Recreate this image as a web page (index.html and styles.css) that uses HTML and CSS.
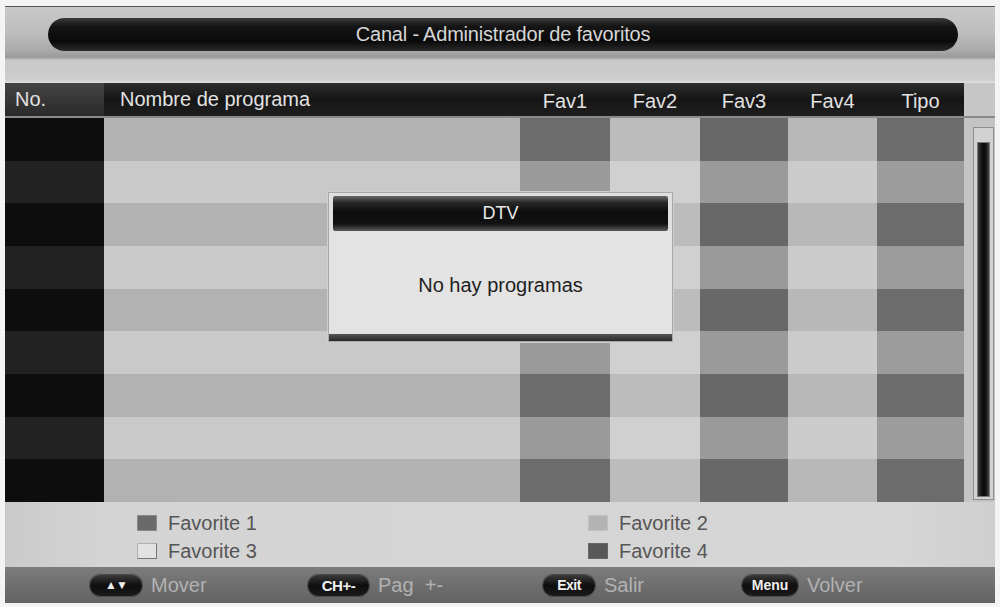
FILE: index.html
```html
<!DOCTYPE html>
<html>
<head>
<meta charset="utf-8">
<link rel="stylesheet" href="styles.css">
</head>
<body>
<div class="screen">
  <div class="top">
    <div class="title-pill">Canal - Administrador de favoritos</div>
    <div class="top-band"></div>
  </div>
  <div class="header">
    <div class="h-no">No.</div>
    <div class="h-name">Nombre de programa</div>
    <div class="h-col">Fav1</div>
    <div class="h-col">Fav2</div>
    <div class="h-col">Fav3</div>
    <div class="h-col">Fav4</div>
    <div class="h-col">Tipo</div>
    <div class="h-end"></div>
  </div>
  <div class="table">
    <div class="rows">
      <div class="row a"><div></div><div></div><div></div><div></div><div></div><div></div><div></div></div>
      <div class="row b"><div></div><div></div><div></div><div></div><div></div><div></div><div></div></div>
      <div class="row a"><div></div><div></div><div></div><div></div><div></div><div></div><div></div></div>
      <div class="row b"><div></div><div></div><div></div><div></div><div></div><div></div><div></div></div>
      <div class="row a"><div></div><div></div><div></div><div></div><div></div><div></div><div></div></div>
      <div class="row b"><div></div><div></div><div></div><div></div><div></div><div></div><div></div></div>
      <div class="row a"><div></div><div></div><div></div><div></div><div></div><div></div><div></div></div>
      <div class="row b"><div></div><div></div><div></div><div></div><div></div><div></div><div></div></div>
      <div class="row a"><div></div><div></div><div></div><div></div><div></div><div></div><div></div></div>
    </div>
    <div class="scroll">
      <div class="scroll-frame"><div class="scroll-track"></div></div>
    </div>
  </div>
  <div class="legend">
    <div class="leg"><span class="sw sw1"></span>Favorite 1</div>
    <div class="leg"><span class="sw sw2"></span>Favorite 2</div>
    <div class="leg"><span class="sw sw3"></span>Favorite 3</div>
    <div class="leg"><span class="sw sw4"></span>Favorite 4</div>
  </div>
  <div class="footer">
    <div class="fitem"><span class="key key-arrows">▲▼</span>Mover</div>
    <div class="fitem"><span class="key key-ch">CH+-</span>Pag&nbsp; +-</div>
    <div class="fitem"><span class="key key-exit">Exit</span>Salir</div>
    <div class="fitem"><span class="key key-menu">Menu</span>Volver</div>
  </div>

  <div class="dialog">
    <div class="dlg-title">DTV</div>
    <div class="dlg-body">No hay programas</div>
    <div class="dlg-bottom"></div>
  </div>
</div>
</body>
</html>
```
FILE: styles.css
```css
html, body {
  margin: 0;
  padding: 0;
  background: #f4f4f4;
}
body {
  font-family: "Liberation Sans", Arial, sans-serif;
}
.screen {
  position: relative;
  width: 990px;
  height: 597px;
  margin: 6px 0 0 5px;
  background: #c6c6c6;
  display: flex;
  flex-direction: column;
  overflow: hidden;
  border-top: 1px solid #555;
  box-sizing: border-box;
}

/* top title area */
.top {
  height: 76px;
  display: flex;
  flex-direction: column;
  background: linear-gradient(#c9c9c9 0%, #bdbdbd 35%, #a9a9a9 58%, #9a9a9a 66%, #c8c8c8 70%, #cdcdcd 95%, #e0e0e0 100%);
}
.title-pill {
  margin: 11px 37px 0 43px;
  height: 33px;
  border-radius: 17px;
  background: linear-gradient(#3a3a3a 0%, #151515 25%, #0a0a0a 70%, #2a2a2a 100%);
  color: #d6d6d6;
  font-size: 20px;
  line-height: 33px;
  text-align: center;
  letter-spacing: -0.2px;
}
.top-band {
  flex: 1;
}

/* header */
.header {
  height: 33px;
  display: grid;
  grid-template-columns: 99px 416px 90px 90px 88px 89px 87px 31px;
  align-items: center;
  background: linear-gradient(#2e2e2e, #151515 50%, #1f1f1f);
  border-bottom: 2px solid #8a8a8a;
  color: #e2e2e2;
  font-size: 20px;
}
.h-no {
  height: 100%;
  line-height: 33px;
  padding-left: 10px;
  background: linear-gradient(#444, #2a2a2a);
}
.h-name {
  padding-left: 16px;
}
.h-col {
  text-align: center;
  padding-top: 4px;
}
.h-end {
  height: 100%;
  background: #c6c6c6;
}

/* table */
.table {
  height: 384px;
  display: flex;
}
.rows {
  width: 959px;
  display: flex;
  flex-direction: column;
}
.row {
  flex: 1;
  display: grid;
  grid-template-columns: 99px 416px 90px 90px 88px 89px 87px;
}
.row.a > div:nth-child(1) { background: #0d0d0d; }
.row.a > div:nth-child(2) { background: #b2b2b2; }
.row.a > div:nth-child(3) { background: #6c6c6c; }
.row.a > div:nth-child(4) { background: #bcbcbc; }
.row.a > div:nth-child(5) { background: #686868; }
.row.a > div:nth-child(6) { background: #b8b8b8; }
.row.a > div:nth-child(7) { background: #6c6c6c; }
.row.b > div:nth-child(1) { background: #222222; }
.row.b > div:nth-child(2) { background: #c9c9c9; }
.row.b > div:nth-child(3) { background: #9a9a9a; }
.row.b > div:nth-child(4) { background: #d0d0d0; }
.row.b > div:nth-child(5) { background: #9a9a9a; }
.row.b > div:nth-child(6) { background: #cbcbcb; }
.row.b > div:nth-child(7) { background: #9c9c9c; }

.scroll {
  flex: 1;
  background: #c4c4c4;
  padding: 9px 1px 2px 9px;
}
.scroll-frame {
  height: 100%;
  box-sizing: border-box;
  border: 1px solid #8e8e8e;
  background: #d2d2d2;
  padding: 14px 3px 2px 3px;
}
.scroll-track {
  height: 100%;
  box-sizing: border-box;
  border: 1px solid #777;
  background: linear-gradient(90deg, #3a3a3a, #0c0c0c 40%, #111 70%, #444);
}

/* legend */
.legend {
  height: 65px;
  box-sizing: border-box;
  padding: 7px 0 0 132px;
  display: grid;
  grid-template-columns: 451px auto;
  grid-auto-rows: 28px;
  background: linear-gradient(90deg, #cacaca, #d4d4d4 10%, #d6d6d6 90%, #cfcfcf);
  color: #555;
  font-size: 20px;
}
.leg {
  display: flex;
  align-items: center;
}
.sw {
  width: 20px;
  height: 16px;
  margin-right: 11px;
  box-sizing: border-box;
}
.sw1 { background: #6a6a6a; border: 1px solid #888; }
.sw2 { background: #b3b3b3; border: 1px solid #c0c0c0; }
.sw3 { background: #e2e2e2; border: 1px solid #b0b0b0; border-right-color: #777; border-bottom-color: #777; }
.sw4 { background: #585858; border: 1px solid #666; }

/* footer */
.footer {
  flex: 1;
  display: grid;
  grid-template-columns: 218px 235px 199px auto;
  align-items: center;
  padding-left: 85px;
  background: linear-gradient(#7c7c7c, #6c6c6c 60%, #636363);
  color: #b2b2b2;
  font-size: 20px;
}
.fitem {
  display: flex;
  align-items: center;
}
.key {
  display: inline-block;
  height: 21px;
  border-radius: 11px;
  background: linear-gradient(#3a3a3a, #0e0e0e 50%, #1a1a1a);
  color: #f0f0f0;
  font-size: 14px;
  font-weight: bold;
  line-height: 21px;
  text-align: center;
  margin-right: 9px;
  box-shadow: 0 0 0 1px #4a4a4a;
}
.key-arrows { width: 52px; font-size: 12px; letter-spacing: -1px; }
.key-ch { width: 61px; font-size: 15px; letter-spacing: -0.5px; }
.key-exit { width: 52px; letter-spacing: -0.5px; }
.key-menu { width: 56px; }

/* dialog */
.dialog {
  position: absolute;
  left: 323px;
  top: 185px;
  width: 345px;
  height: 150px;
  box-sizing: border-box;
  background: #e0e0e0;
  border: 1px solid #a8a8a8;
  padding: 3px 4px 0 4px;
  display: flex;
  flex-direction: column;
  box-shadow: 0 0 0 1px #cfcfcf;
}
.dlg-title {
  height: 35px;
  border-radius: 2px;
  background: linear-gradient(#6a6a6a 0%, #2a2a2a 18%, #0c0c0c 45%, #121212 80%, #5a5a5a 100%);
  color: #e8e8e8;
  font-size: 18px;
  line-height: 35px;
  text-align: center;
}
.dlg-body {
  flex: 1;
  display: flex;
  align-items: center;
  justify-content: center;
  color: #1e1e1e;
  font-size: 20px;
  background: #e3e3e3;
  margin: 0 -4px;
  padding-top: 6px;
}
.dlg-bottom {
  height: 7px;
  margin: 0 -4px;
  background: linear-gradient(#555, #2a2a2a);
}
```
